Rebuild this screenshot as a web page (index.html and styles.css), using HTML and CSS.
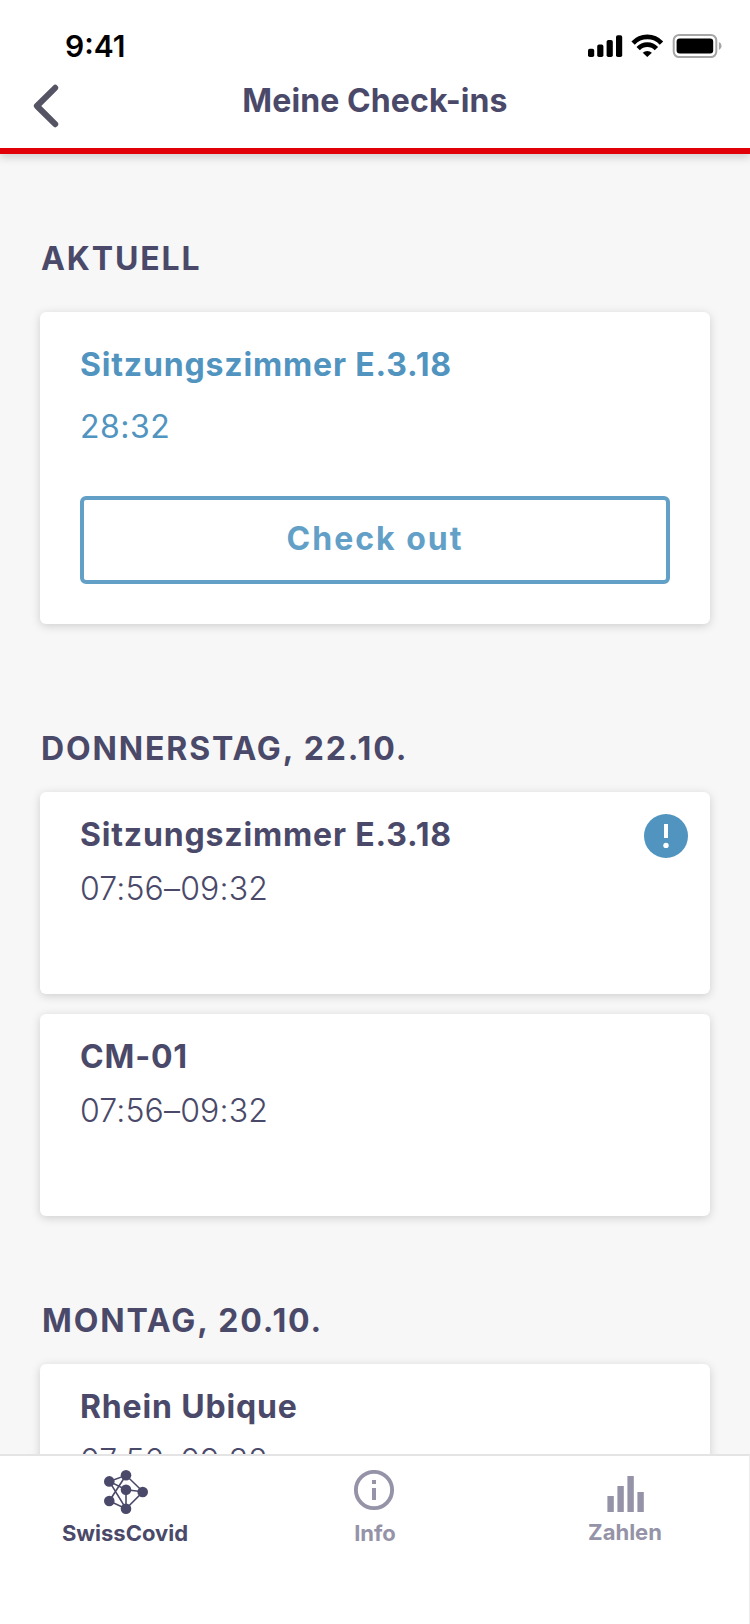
FILE: index.html
```html
<!DOCTYPE html>
<html lang="de">
<head>
<meta charset="utf-8">
<title>Meine Check-ins</title>
<link rel="stylesheet" href="styles.css">
</head>
<body>
<div class="screen">
  <header class="header">
    <div class="status">
      <span class="clock">9:41</span>
      <svg class="status-icons" width="136" height="26" viewBox="0 0 136 26">
        <rect x="1" y="14.8" width="6.2" height="8.2" rx="1.8"/>
        <rect x="10.2" y="10.6" width="6.2" height="12.4" rx="1.8"/>
        <rect x="19.6" y="6" width="6.2" height="17" rx="1.8"/>
        <rect x="29" y="1.2" width="6.2" height="21.8" rx="1.8"/>
        <g fill="none" stroke="#000" stroke-width="4.6">
          <path d="M46.1 9.1a19.3 19.3 0 0 1 28.4 0"/>
          <path d="M51.2 14.6a12.3 12.3 0 0 1 18.2 0"/>
        </g>
        <path d="M60.3 23l-4.6-4.2a6.8 6.8 0 0 1 9.2 0z"/>
        <rect x="86.7" y="1" width="42.6" height="22" rx="5.4" fill="none" stroke="#a6a6a6" stroke-width="2"/>
        <rect x="89.6" y="4.6" width="36.6" height="14.8" rx="3"/>
        <path d="M131.9 8.1v8a4.3 4.3 0 0 0 0-8z" fill="#a6a6a6"/>
      </svg>
    </div>
    <div class="nav">
      <svg class="back" width="26" height="44" viewBox="0 0 26 44"><path d="M22.2 3.8L3.9 22l18.3 18.2" fill="none" stroke="#555465" stroke-width="6" stroke-linecap="round" stroke-linejoin="round"/></svg>
      <h1 class="title">Meine Check-ins</h1>
    </div>
  </header>
  <main class="content">
    <section class="group">
      <h2 class="heading">AKTUELL</h2>
      <article class="card current">
        <h3 class="place">Sitzungszimmer E.3.18</h3>
        <p class="time">28:32</p>
        <button class="checkout">Check out</button>
      </article>
    </section>
    <section class="group">
      <h2 class="heading">DONNERSTAG, 22.10.</h2>
      <article class="card">
        <div>
          <h3 class="place">Sitzungszimmer E.3.18</h3>
          <p class="time">07:56–09:32</p>
        </div>
        <svg class="alert" width="44" height="44" viewBox="0 0 44 44"><circle cx="22" cy="22" r="22" fill="#5094bf"/><rect x="20" y="10" width="4" height="14" fill="#fff"/><circle cx="22" cy="31.4" r="2.7" fill="#fff"/></svg>
      </article>
      <article class="card">
        <div>
          <h3 class="place">CM-01</h3>
          <p class="time">07:56–09:32</p>
        </div>
      </article>
    </section>
    <section class="group">
      <h2 class="heading">MONTAG, 20.10.</h2>
      <article class="card">
        <div>
          <h3 class="place">Rhein Ubique</h3>
          <p class="time">07:56–09:32</p>
        </div>
      </article>
    </section>
  </main>
  <nav class="tabs">
    <a class="tab active">
      <svg width="44" height="46" viewBox="0 0 44 46">
        <path d="M5.3 11.4L22 5.3l17 16.5L22 38.7 5.3 31 22 5.3M5.3 11.4L22 19.8l17 2M5.3 11.4L22 38.7V19.8" fill="none" stroke="currentColor" stroke-width="1.6"/>
        <g fill="currentColor"><circle cx="5.3" cy="11.4" r="5.3"/><circle cx="22" cy="5.3" r="5.3"/><circle cx="22" cy="19.8" r="5.3"/><circle cx="38.7" cy="22" r="5.3"/><circle cx="5.3" cy="31" r="5.3"/><circle cx="22" cy="38.7" r="5.3"/></g>
      </svg>
      <span>SwissCovid</span>
    </a>
    <a class="tab">
      <svg width="46" height="46" viewBox="0 0 46 46"><circle cx="22" cy="20" r="18.1" fill="none" stroke="currentColor" stroke-width="3.9"/><path d="M20 10h4v4h-4zM20 18h4v12h-4z" fill="currentColor"/></svg>
      <span>Info</span>
    </a>
    <a class="tab figures">
      <svg width="46" height="46" viewBox="0 0 46 46"><path d="M5.4 26h6.4v16H5.4zM15.4 16h6.4v26h-6.4zM25.4 6h6.4v36h-6.4zM35.4 22h6.4v20h-6.4z" fill="currentColor"/></svg>
      <span>Zahlen</span>
    </a>
  </nav>
</div>
</body>
</html>
```

FILE: styles.css
```css
* { box-sizing: border-box; }
body { margin: 0; font-family: Inter, "Liberation Sans", sans-serif; color: #4a4969; }
h1, h2, h3, p { margin: 0; font-size: 32px; line-height: 40px; }
.screen { display: flex; flex-direction: column; width: 750px; height: 1624px; overflow: hidden; background: #f7f7f7; }
.header { position: relative; z-index: 1; flex: none; height: 154px; background: #fff; border-bottom: 6px solid #e20008; box-shadow: 0 4px 8px rgba(0, 0, 0, 0.15); }
.status { display: flex; justify-content: space-between; height: 81px; padding: 28px 27px 0 65px; }
.clock { font-size: 30px; line-height: 36px; font-weight: 600; color: #000; }
.status-icons { margin-top: 6px; }
.nav { display: grid; grid-template-columns: 1fr auto 1fr; padding: 0 33px; }
.back { margin-top: 3px; }
.title { font-weight: 700; letter-spacing: 0.1px; }
.content { flex: 1; min-height: 0; overflow: hidden; padding: 85px 40px 0; }
.group { display: flex; flex-direction: column; }
.group + .group { margin-top: 85px; }
.group:nth-child(2) { margin-top: 105px; }
.heading { padding-left: 1px; font-weight: 700; letter-spacing: 1.87px; margin-bottom: 23px; }
.group:nth-child(3) .heading { padding-left: 2px; }
.card { display: flex; justify-content: space-between; height: 202px; padding: 22px 22px 22px 40px; background: #fff; border-radius: 6px; box-shadow: 0 2px 10px rgba(0, 0, 0, 0.17); }
.card + .card { margin-top: 20px; }
.place { padding-top: 1px; font-weight: 700; letter-spacing: 0.83px; }
.time { margin-top: 14px; font-weight: 300; letter-spacing: 0.15px; }
.current { flex-direction: column; justify-content: flex-start; height: 312px; padding: 32px 40px 40px; margin-top: 10px; color: #5094bf; }
.current .time { margin-top: 22px; font-weight: 400; letter-spacing: 0.5px; }
.checkout { height: 88px; margin-top: 49px; padding: 0 0 2px; background: none; border: 4px solid #63a0c7; border-radius: 6px; color: #63a0c7; font: 700 32px/40px Inter, "Liberation Sans", sans-serif; letter-spacing: 2px; }
.alert { flex: none; }
.tabs { flex: none; display: grid; grid-template-columns: repeat(3, 250px); width: 750px; height: 170px; padding-top: 14px; background: #fff; border-top: 2px solid #e4e4e4; border-right: 1px solid #ececec; }
.tab { display: flex; flex-direction: column; align-items: center; color: #9593a7; font-size: 22px; line-height: 28px; font-weight: 700; }
.tab span { margin-top: 3px; }
.active { color: #4a4969; }
.active svg { margin-left: 2px; }
.figures span { margin-top: 2px; }
```
